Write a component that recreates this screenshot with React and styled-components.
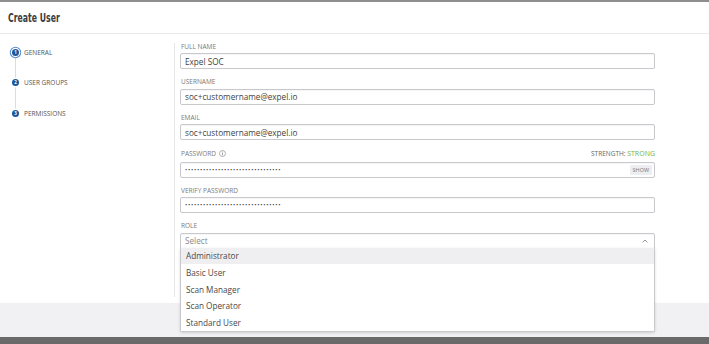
import React from 'react';
import styled, { createGlobalStyle } from 'styled-components';

const Global = createGlobalStyle`
  html, body { margin: 0; padding: 0; background: #fff; }
  body { font-family: "Open Sans", "Liberation Sans", sans-serif; }
  * { box-sizing: border-box; }
`;

const Page = styled.div`
  width: 709px;
  height: 344px;
  display: flex;
  flex-direction: column;
  overflow: hidden;
  border-top: 2px solid #8e8e8e;
`;

const Header = styled.header`
  height: 32px;
  flex: none;
  display: flex;
  align-items: center;
  padding: 0 8px;
  border-bottom: 1px solid #e9e9ec;
`;

const Title = styled.h1`
  margin: 0;
  font-family: "DejaVu Sans Condensed", "Liberation Sans", sans-serif;
  font-weight: 700;
  font-size: 12px;
  color: #3d3d3d;
  transform: scaleX(0.72);
  transform-origin: left center;
`;

const Main = styled.main`
  height: 269px;
  flex: none;
  display: flex;
  background: #fff;
`;

const Sidebar = styled.nav`
  width: 175px;
  flex: none;
  margin: 9px 0 6px;
  padding: 3.5px 0 0 10px;
  border-right: 1px solid #e6e6e8;
`;

const Steps = styled.ol`
  list-style: none;
  margin: 0;
  padding: 0;
  display: flex;
  flex-direction: column;
  gap: 19.5px;
  position: relative;
  &::before {
    content: "";
    position: absolute;
    left: 5px;
    top: 5px;
    bottom: 5px;
    width: 1px;
    background: #dcdcdf;
  }
`;

const Step = styled.li`
  display: flex;
  align-items: center;
  height: 11px;
  gap: 3px;
  position: relative;
`;

const Dot = styled.span`
  width: 11px;
  height: 11px;
  display: flex;
  align-items: center;
  justify-content: center;
  &::after {
    content: "${p => p.$n}";
    width: 7px;
    height: 7px;
    border-radius: 50%;
    background: #1b579c;
    color: #fff;
    font-size: 4.5px;
    font-weight: 700;
    line-height: 7px;
    text-align: center;
    box-shadow: ${p => (p.$active ? '0 0 0 1.2px #fff, 0 0 0 2.2px #4f8ccd' : '0 0 0 1.5px #fff')};
  }
`;

const StepLabel = styled.span`
  font-size: 6.5px;
  color: #555;
  text-transform: uppercase;
`;

const Form = styled.form`
  width: 475px;
  margin-left: 5px;
  padding-top: 8px;
  display: flex;
  flex-direction: column;
  gap: 8.5px;
`;

const Field = styled.div`
  display: flex;
  flex-direction: column;
`;

const LabelRow = styled.div`
  display: flex;
  justify-content: space-between;
  align-items: center;
  height: ${p => (p.$tall ? '10px' : '8px')};
  margin-bottom: 3px;
`;

const Label = styled.label`
  display: flex;
  align-items: center;
  gap: 3px;
  padding-left: 1px;
  font-size: 6.5px;
  color: #7a7a7a;
  text-transform: uppercase;
`;

const Strength = styled.span`
  font-size: 6.5px;
  color: #666;
  text-transform: uppercase;
  & b {
    font-weight: 400;
    font-size: 7px;
    color: #6fb443;
  }
`;

const Box = styled.div`
  position: relative;
  height: 16px;
  display: flex;
  align-items: center;
  padding: 0 ${p => (p.$tightRight ? '2px' : '4px')} 0 4px;
  border: 1px solid #c9c9cd;
  border-radius: ${p => (p.$open ? '2px 2px 0 0' : '2px')};
  box-shadow: inset 0 1px 1px rgba(0, 0, 0, 0.04);
  font-size: 8.2px;
  color: ${p => (p.$placeholder ? '#8a8a8a' : '#3f3f3f')};
  background: #fff;
`;

const Dots = styled.span`
  font-size: 6px;
  letter-spacing: 0.75px;
  color: #444;
`;

const ShowButton = styled.span`
  margin-left: auto;
  height: 10px;
  padding: 0 3px;
  display: flex;
  align-items: center;
  background: #eceef1;
  border-radius: 1px;
  font-size: 5.5px;
  color: #777;
`;

const Chevron = styled.svg`
  margin-left: auto;
  margin-right: 2px;
`;

const Menu = styled.ul`
  position: absolute;
  z-index: 10;
  top: 100%;
  left: -1px;
  right: -1px;
  margin: 0;
  padding: 0;
  list-style: none;
  background: #fff;
  border: 1px solid #c9c9cd;
  border-top: none;
  border-radius: 0 0 2px 2px;
  box-shadow: 0 1px 3px rgba(0, 0, 0, 0.15);
`;

const Option = styled.li`
  height: 16.7px;
  display: flex;
  align-items: center;
  padding-left: 5px;
  font-size: 8.2px;
  color: #484848;
  background: ${p => (p.$active ? '#efeff2' : '#fff')};
`;

const Footer = styled.footer`
  height: 34px;
  flex: none;
  background: #f1f1f3;
`;

const BottomBar = styled.div`
  height: 7px;
  flex: none;
  background: #6a6a6a;
`;

const InfoIcon = () => (
  <svg width="7" height="7" viewBox="0 0 14 14" aria-hidden="true">
    <circle cx="7" cy="7" r="6" fill="none" stroke="#888" strokeWidth="1.3" />
    <circle cx="7" cy="4" r="1" fill="#888" />
    <rect x="6.2" y="6" width="1.6" height="4.5" fill="#888" />
  </svg>
);

const steps = ['General', 'User Groups', 'Permissions'];
const roles = ['Administrator', 'Basic User', 'Scan Manager', 'Scan Operator', 'Standard User'];
const dots = '\u2022'.repeat(32);

export default function App() {
  return (
    <>
      <Global />
      <Page>
        <Header>
          <Title>Create User</Title>
        </Header>
        <Main>
          <Sidebar>
            <Steps>
              {steps.map((s, i) => (
                <Step key={s}>
                  <Dot $n={i + 1} $active={i === 0} />
                  <StepLabel>{s}</StepLabel>
                </Step>
              ))}
            </Steps>
          </Sidebar>
          <Form onSubmit={e => e.preventDefault()}>
            <Field>
              <LabelRow><Label>Full Name</Label></LabelRow>
              <Box>Expel SOC</Box>
            </Field>
            <Field>
              <LabelRow><Label>Username</Label></LabelRow>
              <Box>soc+customername@expel.io</Box>
            </Field>
            <Field>
              <LabelRow><Label>Email</Label></LabelRow>
              <Box>soc+customername@expel.io</Box>
            </Field>
            <Field>
              <LabelRow $tall>
                <Label>Password <InfoIcon /></Label>
                <Strength>Strength: <b>Strong</b></Strength>
              </LabelRow>
              <Box $tightRight>
                <Dots>{dots}</Dots>
                <ShowButton>SHOW</ShowButton>
              </Box>
            </Field>
            <Field>
              <LabelRow><Label>Verify Password</Label></LabelRow>
              <Box><Dots>{dots}</Dots></Box>
            </Field>
            <Field>
              <LabelRow><Label>Role</Label></LabelRow>
              <Box $placeholder $open>
                Select
                <Chevron width="6" height="4" viewBox="0 0 6 4" aria-hidden="true">
                  <polyline points="0.6,3.4 3,1 5.4,3.4" fill="none" stroke="#888" strokeWidth="0.9" />
                </Chevron>
                <Menu>
                  {roles.map((r, i) => (
                    <Option key={r} $active={i === 0}>{r}</Option>
                  ))}
                </Menu>
              </Box>
            </Field>
          </Form>
        </Main>
        <Footer />
        <BottomBar />
      </Page>
    </>
  );
}
